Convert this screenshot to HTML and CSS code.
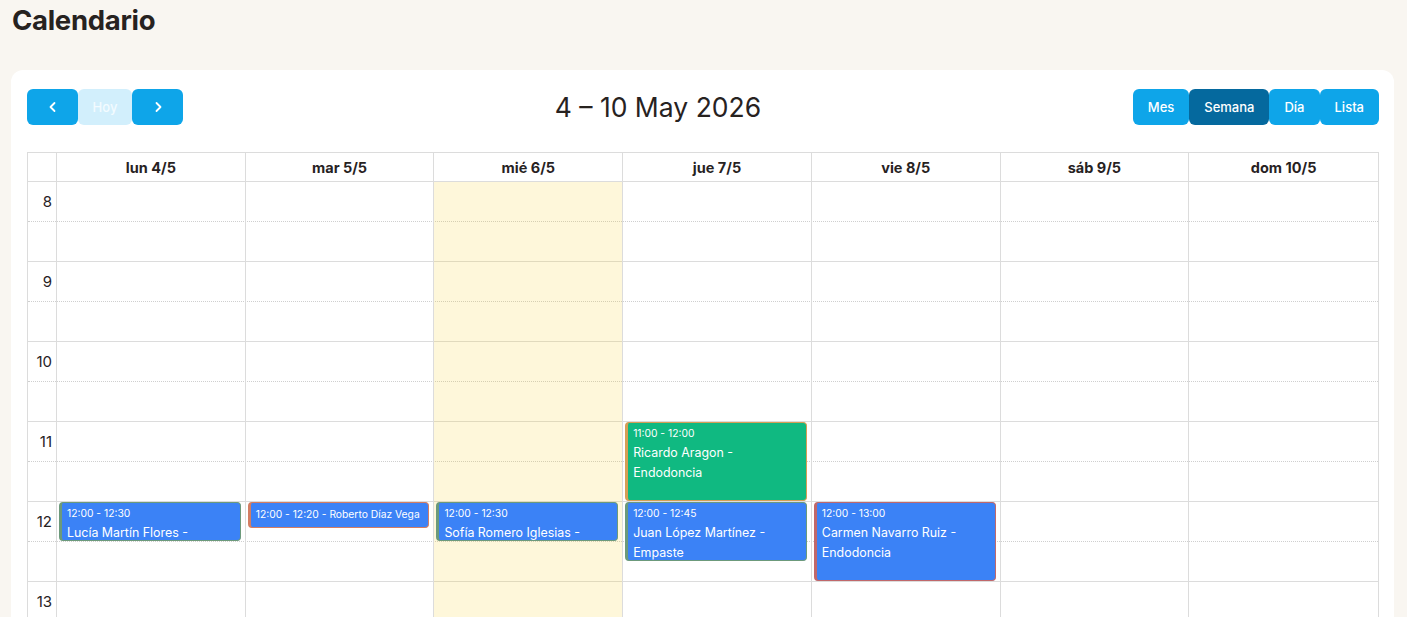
FILE: index.html
```html
<!DOCTYPE html>
<html lang="es">
<head>
<meta charset="utf-8">
<title>Calendario</title>
<link rel="stylesheet" href="styles.css">
</head>
<body>
<h1 class="page-title">Calendario</h1>
<section class="card">
  <div class="toolbar">
    <div class="btn-group">
      <button class="btn btn-icon" aria-label="Anterior">
        <svg width="14" height="14" viewBox="0 0 14 14"><path d="M8.5 3 L4.5 7 L8.5 11" fill="none" stroke="#fff" stroke-width="1.8" stroke-linecap="round" stroke-linejoin="round"/></svg>
      </button>
      <button class="btn btn-disabled">Hoy</button>
      <button class="btn btn-icon" aria-label="Siguiente">
        <svg width="14" height="14" viewBox="0 0 14 14"><path d="M5.5 3 L9.5 7 L5.5 11" fill="none" stroke="#fff" stroke-width="1.8" stroke-linecap="round" stroke-linejoin="round"/></svg>
      </button>
    </div>
    <h2 class="range-title">4 – 10 May 2026</h2>
    <div class="btn-group">
      <button class="btn btn-view">Mes</button>
      <button class="btn btn-view active">Semana</button>
      <button class="btn btn-view">Día</button>
      <button class="btn btn-view">Lista</button>
    </div>
  </div>

  <div class="calendar">
    <div class="head">
      <div class="head-cell axis"></div>
      <div class="head-cell">lun 4/5</div>
      <div class="head-cell">mar 5/5</div>
      <div class="head-cell">mié 6/5</div>
      <div class="head-cell">jue 7/5</div>
      <div class="head-cell">vie 8/5</div>
      <div class="head-cell">sáb 9/5</div>
      <div class="head-cell">dom 10/5</div>
    </div>
    <div class="timegrid">
      <div class="slats">
        <div class="slat"><span class="slat-label">8</span></div>
        <div class="slat minor"></div>
        <div class="slat"><span class="slat-label">9</span></div>
        <div class="slat minor"></div>
        <div class="slat"><span class="slat-label">10</span></div>
        <div class="slat minor"></div>
        <div class="slat"><span class="slat-label">11</span></div>
        <div class="slat minor"></div>
        <div class="slat"><span class="slat-label">12</span></div>
        <div class="slat minor"></div>
        <div class="slat"><span class="slat-label">13</span></div>
        <div class="slat minor"></div>
        <div class="slat"><span class="slat-label">14</span></div>
        <div class="slat minor"></div>
      </div>
      <div class="cols">
        <div class="col axis"></div>
        <div class="col">
          <div class="event ev-blue strip-green" style="top:320px;height:39px">
            <div class="ev-time">12:00 - 12:30</div>
            <div class="ev-title">Lucía Martín Flores - Empaste</div>
          </div>
        </div>
        <div class="col">
          <div class="event ev-blue strip-salmon short" style="top:320px;height:26px">
            <div class="ev-time">12:00 - 12:20 - Roberto Díaz Vega</div>
          </div>
        </div>
        <div class="col today">
          <div class="event ev-blue strip-green" style="top:320px;height:39px">
            <div class="ev-time">12:00 - 12:30</div>
            <div class="ev-title">Sofía Romero Iglesias - Empaste</div>
          </div>
        </div>
        <div class="col">
          <div class="event ev-green strip-orange" style="top:240px;height:79px">
            <div class="ev-time">11:00 - 12:00</div>
            <div class="ev-title">Ricardo Aragon - Endodoncia</div>
          </div>
          <div class="event ev-blue strip-green" style="top:320px;height:59px">
            <div class="ev-time">12:00 - 12:45</div>
            <div class="ev-title">Juan López Martínez - Empaste</div>
          </div>
        </div>
        <div class="col">
          <div class="event ev-blue strip-red" style="top:320px;height:79px">
            <div class="ev-time">12:00 - 13:00</div>
            <div class="ev-title">Carmen Navarro Ruiz - Endodoncia</div>
          </div>
        </div>
        <div class="col"></div>
        <div class="col"></div>
      </div>
    </div>
  </div>
</section>
</body>
</html>
```

FILE: styles.css
```css
* { box-sizing: border-box; }

html, body {
  margin: 0;
  background: #f9f6f1;
}

body {
  padding: 0 13px 0 11px;
  font-family: "Inter", "Noto Sans", sans-serif;
  color: #27221f;
  overflow: hidden;
}

.page-title {
  margin: 2px 0 0 1px;
  font-size: 27.5px;
  height: 36px;
  line-height: 36px;
  font-weight: 700;
  letter-spacing: -0.3px;
  color: #27221f;
}

.card {
  margin-top: 32px;
  background: #fff;
  border-radius: 12px;
  padding: 19px 15px 40px 16px;
}

.toolbar {
  display: flex;
  align-items: center;
  justify-content: space-between;
  height: 36px;
  margin-bottom: 27px;
}

.btn-group {
  display: flex;
}

.btn {
  height: 36px;
  border: none;
  border-radius: 6px;
  background: #0ea5e9;
  color: #fff;
  font-family: inherit;
  font-size: 13px;
  font-weight: 500;
  padding: 0 15px;
  display: flex;
  align-items: center;
  justify-content: center;
  cursor: pointer;
}

.btn-icon {
  width: 51px;
  padding: 0;
}

.btn-disabled {
  width: 54px;
  padding: 0;
  background: #d2effc;
  color: #f3fbff;
}

.btn-view.active {
  background: #05699e;
}

.range-title {
  margin: 0;
  font-size: 26.5px;
  font-weight: 400;
  color: #27221f;
}

.calendar {
  border: 1px solid #dcdcdc;
  border-bottom: none;
}

.head {
  display: grid;
  grid-template-columns: 29px repeat(7, 1fr);
  border-bottom: 1px solid #dcdcdc;
}

.head-cell {
  height: 28px;
  display: flex;
  align-items: center;
  justify-content: center;
  font-size: 14.5px;
  font-weight: 700;
  border-right: 1px solid #dcdcdc;
}

.head-cell:last-child { border-right: none; }

.timegrid {
  position: relative;
}

.slat {
  height: 40px;
  border-bottom: 1px dotted #cfcfcf;
  display: flex;
  align-items: center;
}

.slat.minor {
  border-bottom: 1px solid #dcdcdc;
}

.slat-label {
  width: 29px;
  text-align: right;
  padding-right: 5px;
  font-size: 15px;
  color: #27221f;
}

.cols {
  position: absolute;
  inset: 0;
  display: grid;
  grid-template-columns: 29px repeat(7, 1fr);
}

.col {
  position: relative;
  border-right: 1px solid #dcdcdc;
}

.col:last-child { border-right: none; }

.col.axis { border-right: 1px solid #dcdcdc; }

.col.today {
  background: rgba(250, 210, 50, 0.18);
}

.event {
  position: absolute;
  left: 2px;
  right: 4px;
  border-radius: 4px;
  border: 1px solid;
  border-left-width: 3px;
  overflow: hidden;
  color: #fff;
  padding: 1px 5px;
}

.ev-blue { background: #3b82f6; }
.ev-green { background: #10b981; }

.strip-green { border-color: #6c9a7b; }
.strip-salmon { border-color: #d37d62; }
.strip-orange { border-color: #d59f55; }
.strip-red { border-color: #c0686b; }

.ev-time {
  font-size: 10.3px;
  line-height: 18px;
  white-space: nowrap;
}

.ev-title {
  font-size: 12.4px;
  line-height: 20px;
  padding-top: 1px;
}

.event.short {
  padding-top: 2px;
}
```
